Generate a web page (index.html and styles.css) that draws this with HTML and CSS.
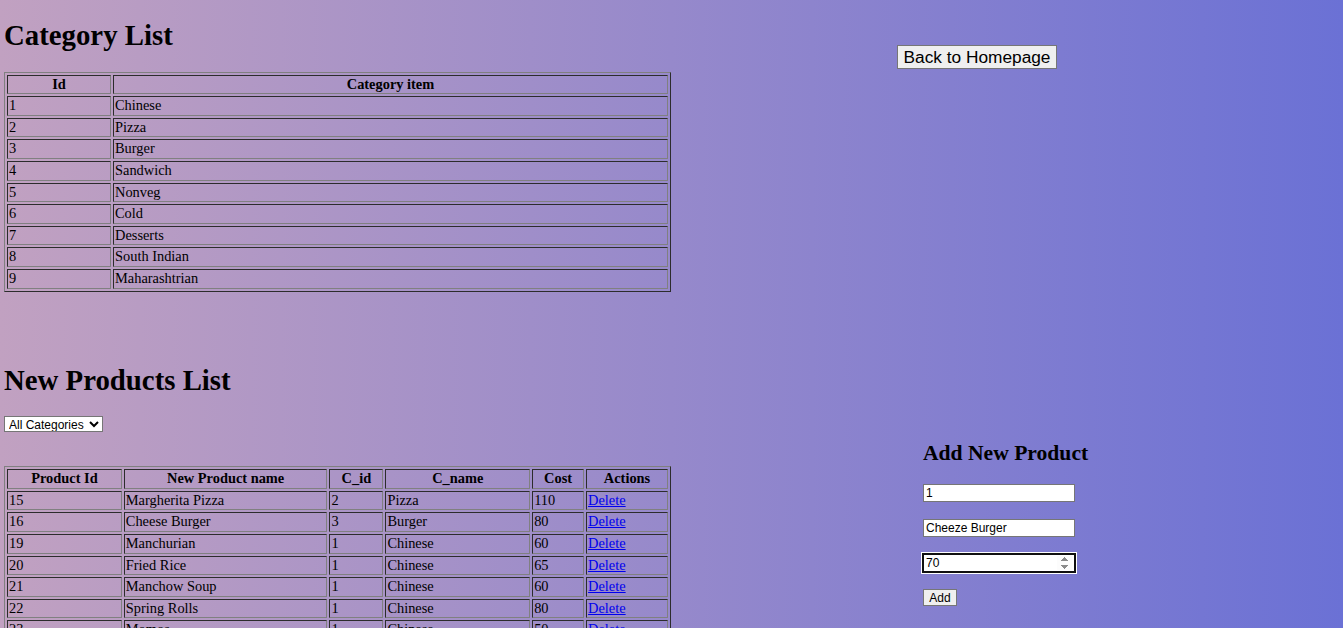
FILE: index.html
```html
<!DOCTYPE html>
<html>
<head>
<meta charset="utf-8">
<title>Admin</title>
<link rel="stylesheet" href="styles.css">
</head>
<body>
<section class="row">
  <div class="left">
    <h1 class="title">Category List</h1>
    <table class="grid cat">
      <thead>
        <tr><th class="c-id">Id</th><th>Category item</th></tr>
      </thead>
      <tbody>
        <tr><td>1</td><td>Chinese</td></tr>
        <tr><td>2</td><td>Pizza</td></tr>
        <tr><td>3</td><td>Burger</td></tr>
        <tr><td>4</td><td>Sandwich</td></tr>
        <tr><td>5</td><td>Nonveg</td></tr>
        <tr><td>6</td><td>Cold</td></tr>
        <tr><td>7</td><td>Desserts</td></tr>
        <tr><td>8</td><td>South Indian</td></tr>
        <tr><td>9</td><td>Maharashtrian</td></tr>
      </tbody>
    </table>
  </div>
  <div class="right top-right">
    <button class="home-btn">Back to Homepage</button>
  </div>
</section>

<section class="row second">
  <div class="left">
    <h1 class="title">New Products List</h1>
    <select class="filter">
      <option>All Categories</option>
      <option>Chinese</option>
      <option>Pizza</option>
    </select>
    <table class="grid prod">
      <thead>
        <tr>
          <th class="p-id">Product Id</th>
          <th class="p-name">New Product name</th>
          <th class="p-cid">C_id</th>
          <th class="p-cname">C_name</th>
          <th class="p-cost">Cost</th>
          <th class="p-act">Actions</th>
        </tr>
      </thead>
      <tbody>
        <tr><td>15</td><td>Margherita Pizza</td><td>2</td><td>Pizza</td><td>110</td><td><a href="#">Delete</a></td></tr>
        <tr><td>16</td><td>Cheese Burger</td><td>3</td><td>Burger</td><td>80</td><td><a href="#">Delete</a></td></tr>
        <tr><td>19</td><td>Manchurian</td><td>1</td><td>Chinese</td><td>60</td><td><a href="#">Delete</a></td></tr>
        <tr><td>20</td><td>Fried Rice</td><td>1</td><td>Chinese</td><td>65</td><td><a href="#">Delete</a></td></tr>
        <tr><td>21</td><td>Manchow Soup</td><td>1</td><td>Chinese</td><td>60</td><td><a href="#">Delete</a></td></tr>
        <tr><td>22</td><td>Spring Rolls</td><td>1</td><td>Chinese</td><td>80</td><td><a href="#">Delete</a></td></tr>
        <tr><td>23</td><td>Momos</td><td>1</td><td>Chinese</td><td>50</td><td><a href="#">Delete</a></td></tr>
        <tr><td>24</td><td>Veg Sandwich</td><td>4</td><td>Sandwich</td><td>70</td><td><a href="#">Delete</a></td></tr>
      </tbody>
    </table>
  </div>
  <div class="right form-col">
    <h2 class="form-title">Add New Product</h2>
    <form class="add-form">
      <input class="field" type="text" value="1">
      <input class="field" type="text" value="Cheeze Burger">
      <input class="field num" type="number" value="70" autofocus>
      <button class="add-btn" type="button">Add</button>
    </form>
  </div>
</section>
</body>
</html>
```

FILE: styles.css
```css
html {
  background: linear-gradient(to right, #c1a1c1 0%, #6b71d5 100%);
  min-height: 100%;
}

body {
  margin: 0;
  padding: 0 4px;
  font-family: "Liberation Serif", "Times New Roman", serif;
  font-size: 14.4px;
  color: #000;
}

.row {
  display: flex;
  align-items: flex-start;
}

.second {
  margin-top: 53px;
}

.left {
  width: 667px;
  flex: none;
}

.right {
  flex: 1;
}

.title {
  font-size: 28.8px;
  line-height: 33px;
  font-weight: bold;
  margin: 19.3px 0;
}

.grid {
  width: 667px;
  border: 1px outset grey;
  border-spacing: 2px;
}

.grid th,
.grid td {
  border: 1px inset grey;
  padding: 1px 1px;
  line-height: 15.6px;
  text-align: left;
  vertical-align: middle;
}

.grid th {
  text-align: center;
  font-weight: bold;
}

.c-id { width: 100px; }

.p-id { width: 111px; }
.p-name { width: 200px; }
.p-cid { width: 50px; }
.p-cname { width: 141px; }
.p-cost { width: 48px; }
.p-act { width: 78px; }

.grid a {
  color: #0000ee;
  text-decoration: underline;
}

.filter {
  display: block;
  width: 99px;
  height: 16px;
  padding: 0;
  font-family: "Liberation Sans", Arial, sans-serif;
  font-size: 12px;
  border: 1px solid #767676;
  border-radius: 0;
  background: #fff;
  color: #000;
}

.prod {
  margin-top: 34px;
}

.top-right {
  padding-left: 226px;
  padding-top: 45px;
}

.home-btn {
  font-family: "Liberation Sans", Arial, sans-serif;
  font-size: 17.3px;
  height: 24px;
  width: 160px;
  padding: 0 4px;
  border: 1px solid #767676;
  border-radius: 0;
  background: #efefef;
  color: #000;
  line-height: 20px;
}

.form-col {
  padding-left: 252px;
  padding-top: 79px;
}

.form-title {
  font-size: 21.6px;
  line-height: 25px;
  font-weight: bold;
  margin: 17.9px 0;
}

.add-form {
  display: flex;
  flex-direction: column;
  align-items: flex-start;
  gap: 17px;
}

.field {
  box-sizing: border-box;
  width: 152px;
  height: 18px;
  padding: 0 2px;
  font-family: "Liberation Sans", Arial, sans-serif;
  font-size: 12px;
  border: 1px solid #767676;
  border-radius: 0;
  background: #fff;
  color: #000;
  margin: 0;
}

.num {
  outline: 2px solid #101010;
  outline-offset: -1px;
  box-shadow: 0 0 0 2px #fff;
}

.add-btn {
  box-sizing: border-box;
  width: 34px;
  height: 17px;
  padding: 0;
  font-family: "Liberation Sans", Arial, sans-serif;
  font-size: 12px;
  border: 1px solid #767676;
  border-radius: 0;
  background: #efefef;
  color: #000;
  line-height: 14px;
}
```
